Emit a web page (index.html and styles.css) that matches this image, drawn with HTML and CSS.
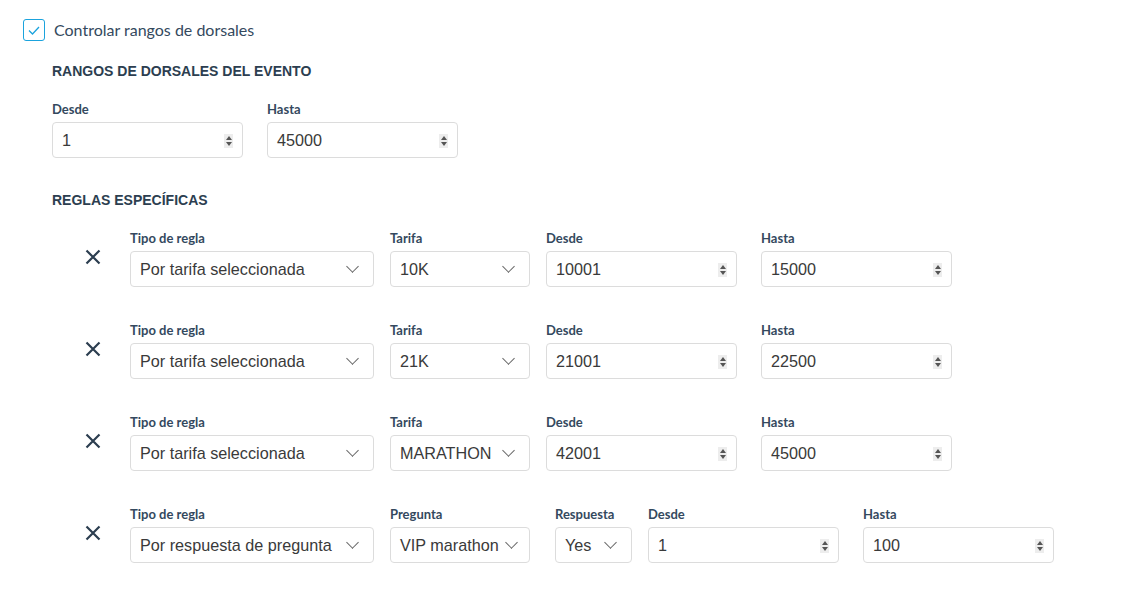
FILE: index.html
```html
<!DOCTYPE html>
<html lang="es">
<head>
<meta charset="utf-8">
<title>Rangos de dorsales</title>
<link rel="stylesheet" href="styles.css">
</head>
<body>
<div class="page">
  <label class="check-row">
    <span class="checkbox">
      <svg width="12" height="9" viewBox="0 0 12 9"><path d="M1 4.5 L4.5 8 L11 1" fill="none" stroke="#1ba3dd" stroke-width="1.3"/></svg>
    </span>
    <span class="check-label">Controlar rangos de dorsales</span>
  </label>

  <div class="content">
    <h3 class="section-title">RANGOS DE DORSALES DEL EVENTO</h3>
    <div class="fields">
      <div class="field w-num gap-24">
        <div class="label">Desde</div>
        <div class="input num"><span>1</span><span class="spin"></span></div>
      </div>
      <div class="field w-num">
        <div class="label">Hasta</div>
        <div class="input num"><span>45000</span><span class="spin"></span></div>
      </div>
    </div>

    <h3 class="section-title second">REGLAS ESPECÍFICAS</h3>

    <div class="rules">
      <div class="rule">
        <span class="remove"><svg width="16" height="16" viewBox="0 0 16 16"><path d="M1.5 1.5 L14.5 14.5 M14.5 1.5 L1.5 14.5" stroke="#2c3e50" stroke-width="2.2"/></svg></span>
        <div class="field w-type gap-16">
          <div class="label">Tipo de regla</div>
          <div class="input select"><span>Por tarifa seleccionada</span><span class="chev"></span></div>
        </div>
        <div class="field w-tarifa gap-16">
          <div class="label">Tarifa</div>
          <div class="input select"><span>10K</span><span class="chev"></span></div>
        </div>
        <div class="field w-num gap-24">
          <div class="label">Desde</div>
          <div class="input num"><span>10001</span><span class="spin"></span></div>
        </div>
        <div class="field w-num">
          <div class="label">Hasta</div>
          <div class="input num"><span>15000</span><span class="spin"></span></div>
        </div>
      </div>

      <div class="rule">
        <span class="remove"><svg width="16" height="16" viewBox="0 0 16 16"><path d="M1.5 1.5 L14.5 14.5 M14.5 1.5 L1.5 14.5" stroke="#2c3e50" stroke-width="2.2"/></svg></span>
        <div class="field w-type gap-16">
          <div class="label">Tipo de regla</div>
          <div class="input select"><span>Por tarifa seleccionada</span><span class="chev"></span></div>
        </div>
        <div class="field w-tarifa gap-16">
          <div class="label">Tarifa</div>
          <div class="input select"><span>21K</span><span class="chev"></span></div>
        </div>
        <div class="field w-num gap-24">
          <div class="label">Desde</div>
          <div class="input num"><span>21001</span><span class="spin"></span></div>
        </div>
        <div class="field w-num">
          <div class="label">Hasta</div>
          <div class="input num"><span>22500</span><span class="spin"></span></div>
        </div>
      </div>

      <div class="rule">
        <span class="remove"><svg width="16" height="16" viewBox="0 0 16 16"><path d="M1.5 1.5 L14.5 14.5 M14.5 1.5 L1.5 14.5" stroke="#2c3e50" stroke-width="2.2"/></svg></span>
        <div class="field w-type gap-16">
          <div class="label">Tipo de regla</div>
          <div class="input select"><span>Por tarifa seleccionada</span><span class="chev"></span></div>
        </div>
        <div class="field w-tarifa gap-16">
          <div class="label">Tarifa</div>
          <div class="input select"><span>MARATHON</span><span class="chev"></span></div>
        </div>
        <div class="field w-num gap-24">
          <div class="label">Desde</div>
          <div class="input num"><span>42001</span><span class="spin"></span></div>
        </div>
        <div class="field w-num">
          <div class="label">Hasta</div>
          <div class="input num"><span>45000</span><span class="spin"></span></div>
        </div>
      </div>

      <div class="rule">
        <span class="remove"><svg width="16" height="16" viewBox="0 0 16 16"><path d="M1.5 1.5 L14.5 14.5 M14.5 1.5 L1.5 14.5" stroke="#2c3e50" stroke-width="2.2"/></svg></span>
        <div class="field w-type gap-16">
          <div class="label">Tipo de regla</div>
          <div class="input select"><span>Por respuesta de pregunta</span><span class="chev"></span></div>
        </div>
        <div class="field w-tarifa gap-25">
          <div class="label">Pregunta</div>
          <div class="input select"><span>VIP marathon</span><span class="chev"></span></div>
        </div>
        <div class="field w-resp gap-16">
          <div class="label">Respuesta</div>
          <div class="input select"><span>Yes</span><span class="chev"></span></div>
        </div>
        <div class="field w-num gap-24">
          <div class="label">Desde</div>
          <div class="input num"><span>1</span><span class="spin"></span></div>
        </div>
        <div class="field w-num">
          <div class="label">Hasta</div>
          <div class="input num"><span>100</span><span class="spin"></span></div>
        </div>
      </div>
    </div>
  </div>
</div>
</body>
</html>
```

FILE: styles.css
```css
* { box-sizing: border-box; }

body {
  margin: 0;
  background: #fff;
  font-family: Lato, "Liberation Sans", sans-serif;
  color: #2c3e50;
}

.page {
  padding: 19px 0 0 23px;
}

.check-row {
  display: flex;
  align-items: center;
  gap: 9px;
  height: 22px;
}

.checkbox {
  width: 22px;
  height: 22px;
  border: 1.5px solid #1ba3dd;
  border-radius: 3px;
  display: flex;
  align-items: center;
  justify-content: center;
  padding-top: 1px;
}

.check-label {
  font-size: 16px;
  line-height: 20px;
  margin-top: -1px;
  color: #34495e;
}

.content {
  padding-left: 29px;
}

.section-title {
  margin: 21px 0 20px;
  font-family: "Liberation Sans", Arial, sans-serif;
  font-weight: 700;
  font-size: 14px;
  line-height: 18px;
  color: #2c3e50;
}

.section-title.second {
  margin-top: 33px;
}

.fields {
  display: flex;
}

.field {
  display: flex;
  flex-direction: column;
}

.gap-16 { margin-right: 16px; }
.gap-24 { margin-right: 24px; }
.gap-25 { margin-right: 25px; }

.w-num { width: 191px; }
.w-type { width: 244px; }
.w-tarifa { width: 140px; }
.w-resp { width: 77px; }

.label {
  font-size: 13px;
  font-weight: 700;
  line-height: 18px;
  margin-bottom: 4px;
  color: #34495e;
}

.input {
  height: 36px;
  border: 1px solid #dcdcdc;
  border-radius: 4px;
  display: flex;
  align-items: center;
  justify-content: space-between;
  padding: 1px 9px 0 9px;
  font-family: "Liberation Sans", Arial, sans-serif;
  font-size: 16.2px;
  color: #3a3a3a;
  white-space: nowrap;
  overflow: hidden;
}

.input.select {
  padding-right: 16px;
}

.chev {
  width: 9px;
  height: 9px;
  border-right: 1px solid #666;
  border-bottom: 1px solid #666;
  transform: rotate(45deg);
  margin-top: -6px;
  flex-shrink: 0;
  margin-left: 8px;
}

.spin {
  width: 9px;
  height: 14px;
  background: #ededed;
  position: relative;
  flex-shrink: 0;
}

.spin::before,
.spin::after {
  content: "";
  position: absolute;
  left: 1.5px;
  border-left: 3px solid transparent;
  border-right: 3px solid transparent;
}

.spin::before {
  top: 2px;
  border-bottom: 4px solid #555;
}

.spin::after {
  bottom: 2px;
  border-top: 4px solid #555;
}

.rules {
  display: flex;
  flex-direction: column;
  gap: 34px;
}

.rule {
  display: flex;
  align-items: flex-start;
}

.remove {
  width: 16px;
  height: 16px;
  margin: 20px 29px 0 33px;
  display: flex;
}
```
